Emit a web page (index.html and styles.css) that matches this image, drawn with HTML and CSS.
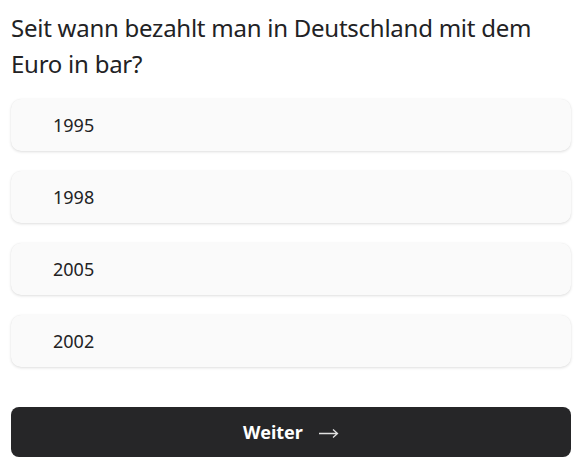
FILE: index.html
```html
<!DOCTYPE html>
<html>
<head>
	<meta charset="utf-8">
	<title>Quiz</title>
	<link rel="stylesheet" href="styles.css">
</head>
<body>
	<div class="quiz">
		<h1 class="question">Seit wann bezahlt man in Deutschland mit dem Euro in bar?</h1>
		<ol class="answers">
			<li class="answer">1995</li>
			<li class="answer">1998</li>
			<li class="answer">2005</li>
			<li class="answer">2002</li>
		</ol>
		<button class="next">Weiter<svg class="arrow" width="20" height="10" viewBox="0 0 20 10"><path d="M0 5.5H18.5M14 1.5L18.5 5.5L14 9.5" fill="none" stroke="currentColor" stroke-width="1.3"/></svg></button>
	</div>
</body>
</html>
```

FILE: styles.css
```css
body{
	margin:0;
	padding:0;
	background-color: white;
	font-family: "Noto Sans", "Open Sans", sans-serif;
	color: rgb(34,34,36);
}
.quiz{
	padding: 10px 5px 0 11px;
	display: flex;
	flex-direction: column;
}
.question{
	margin: 0 0 17px 0;
	font-size: 24px;
	line-height: 36px;
	font-weight: normal;
	letter-spacing: -0.25px;
}
.answers{
	margin: 0;
	padding: 0;
	list-style: none;
	display: flex;
	flex-direction: column;
	gap: 20px;
}
.answer{
	height: 52px;
	line-height: 52px;
	padding-left: 42px;
	font-size: 18px;
	background-color: rgb(250,250,250);
	border-radius: 10px;
	box-shadow: 0 1px 3px rgba(0,0,0,0.13), 0 0 1px rgba(0,0,0,0.06);
}
.next{
	margin-top: 40px;
	height: 50px;
	border: none;
	border-radius: 8px;
	background-color: rgb(38,38,40);
	color: white;
	font-family: inherit;
	font-size: 18px;
	font-weight: bold;
	cursor: pointer;
	display: flex;
	align-items: center;
	justify-content: center;
	gap: 16px;
}
.arrow{
	color: rgb(225,225,225);
	margin-top: 1px;
}
```
